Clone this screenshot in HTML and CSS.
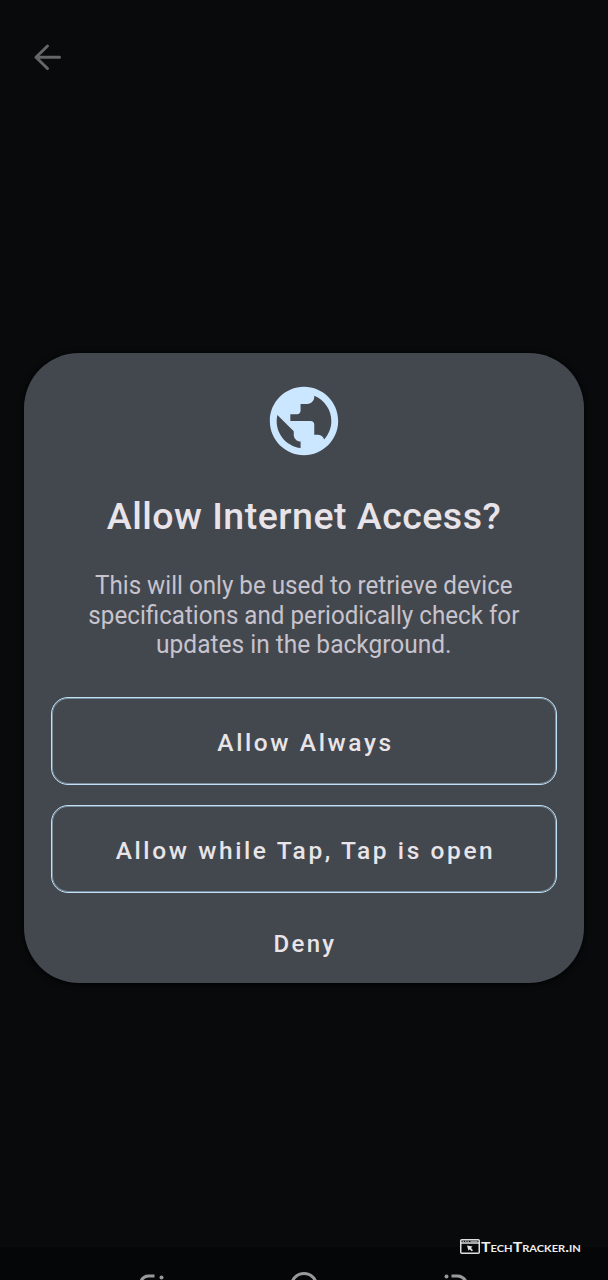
FILE: index.html
```html
<!DOCTYPE html>
<html lang="en">
<head>
<meta charset="utf-8">
<title>Allow Internet Access?</title>
<link rel="stylesheet" href="styles.css">
</head>
<body>
<div class="screen">
  <header class="topbar">
    <svg class="back" width="30" height="28" viewBox="0 0 30 28"><path d="M14.500 3 3 14.300l11.500 11.200M3 14.300h23.500"/></svg>
  </header>
  <main class="dialog">
    <svg class="globe" viewBox="0 0 24 24"><path d="M12 2C6.480 2 2 6.480 2 12s4.480 10 10 10 10-4.480 10-10S17.520 2 12 2zm-1 17.930c-3.950-.490-7-3.850-7-7.930 0-.620.080-1.210.210-1.790L9 15v1c0 1.100.900 2 2 2v1.930zm6.900-2.540c-.260-.810-1-1.390-1.900-1.390h-1v-3c0-.550-.450-1-1-1H8v-2h2c.550 0 1-.450 1-1V7h2c1.100 0 2-.900 2-2v-.410c2.930 1.190 5 4.060 5 7.410 0 2.080-.800 3.970-2.100 5.390z"/></svg>
    <h1 class="title">Allow Internet Access?</h1>
    <p class="message"><span class="line first">This will only be used to retrieve device</span> <span class="line second">specifications and periodically check for</span> <span class="line third">updates in the background.</span></p>
    <button class="option always">Allow Always</button>
    <button class="option while-open">Allow while Tap, Tap is open</button>
    <button class="deny">Deny</button>
  </main>
  <footer class="bottom">
    <div class="watermark">
      <svg class="window-icon" width="20" height="15" viewBox="0 0 20 15"><rect x=".75" y=".75" width="18.500" height="13.500" rx="1"/><path d="M1 4h18"/><path class="dots" d="M2.500 2.300h1.500m1 0h1.500m1 0h1.500m1.500 0h7"/><path class="cursor" d="M7 6.500l5.500 1-1.500 1.500 2 2.200-1.300 1-2-2-1.200 1.500z"/></svg>
      <span class="brand">TechTracker.in</span>
    </div>
    <nav class="navbar">
      <svg width="608" height="33" viewBox="0 0 608 33"><path d="M140.500 35.500q2-6.500 8-6.500h6M291.500 39a12.500 12.500 0 0 1 25 0M451.500 29h6q6 0 9 6.500"/><circle cx="161.500" cy="30.500" r="2"/><circle cx="446.500" cy="29.500" r="2"/></svg>
    </nav>
  </footer>
</div>
</body>
</html>
```
FILE: styles.css
```css
* { box-sizing: border-box; }
body { margin: 0; background: #080a0c; font-family: Roboto, "Liberation Sans", sans-serif; }
.screen { width: 608px; height: 1280px; overflow: hidden; display: flex; flex-direction: column; }
.topbar { height: 353px; flex: none; padding: 43px 0 0 33px; }
.back { display: block; fill: none; stroke: #656667; stroke-width: 3; stroke-linecap: round; stroke-linejoin: round; }
.dialog { width: 560px; height: 630px; flex: none; margin: 0 24px; padding: 26.500px 27px 0; border-radius: 55px; background: #43474e; box-shadow: 0 1px 6px #000; display: flex; flex-direction: column; align-items: center; }
.globe { width: 82px; height: 82px; flex: none; fill: #cbe6ff; }
.title { margin: 29.500px 0 0; height: 50px; line-height: 50px; font-size: 37.500px; font-weight: 500; letter-spacing: .500px; color: #e8e3e8; white-space: nowrap; }
.message { margin: 30px 0 0; font-size: 25px; line-height: 29.500px; color: #c7c3cd; text-align: center; }
.line { display: block; white-space: nowrap; transform: scaleX(.967); }
.third { transform: scaleX(.98); }
.option { width: 506px; height: 88px; flex: none; border: 1px solid #bfe0f6; box-shadow: inset 0 0 0 1px rgba(191, 224, 246, .450); border-radius: 17px; background: none; color: #e8e4e8; font: 500 24.500px Roboto, sans-serif; letter-spacing: 2.600px; padding: 4px 0 0 3px; }
.always { margin-top: 37px; }
.while-open { margin-top: 20px; }
.deny { margin: 35px 0 0; padding: 0 0 0 2px; border: 0; background: none; color: #e8e4e8; font: 500 24px/32px Roboto, sans-serif; letter-spacing: 2.300px; }
.bottom { flex: 1; display: flex; flex-direction: column; justify-content: flex-end; }
.watermark { display: flex; align-items: center; height: 18px; margin: 0 0 -9px 460px; gap: 1px; z-index: 1; }
.window-icon { fill: none; stroke: #dedede; stroke-width: 1.500; flex: none; position: relative; top: -1px; }
.window-icon .dots { stroke: #bbb; stroke-width: 1; }
.window-icon .cursor { fill: #e4e4e4; stroke: none; }
.brand { font: 700 13px/18px Lato, sans-serif; font-variant: small-caps; color: #efefef; transform: scaleX(1.230); transform-origin: left; white-space: nowrap; }
.navbar { height: 33px; background: #050607; }
.navbar svg { display: block; fill: none; stroke: #999; stroke-width: 3; }
.navbar circle { fill: #999; stroke: none; }
```
